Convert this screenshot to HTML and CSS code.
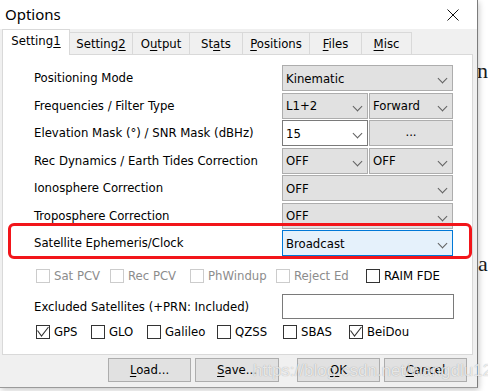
FILE: index.html
```html
<!DOCTYPE html>
<html>
<head>
<meta charset="utf-8">
<title>Options</title>
<link rel="stylesheet" href="styles.css">
</head>
<body>
<div class="desktop">
  <span class="bg-letter bg-n">n</span>
  <span class="bg-letter bg-a">a</span>

  <div class="dialog">
    <div class="titlebar">
      <span class="title">Options</span>
      <svg class="close" width="12" height="12" viewBox="0 0 12 12"><path d="M0.5 0.5 L11.5 11.5 M11.5 0.5 L0.5 11.5" stroke="#111" stroke-width="1" fill="none"/></svg>
    </div>

    <div class="client">
      <div class="tabs">
        <div class="tab active w-s1">Setting<u>1</u></div>
        <div class="tab w-s2">Setting<u>2</u></div>
        <div class="tab w-out">O<u>u</u>tput</div>
        <div class="tab w-stats">St<u>a</u>ts</div>
        <div class="tab w-pos"><u>P</u>ositions</div>
        <div class="tab w-files"><u>F</u>iles</div>
        <div class="tab w-misc"><u>M</u>isc</div>
      </div>

      <div class="panel">
        <div class="form">
          <div class="label">Positioning Mode</div>
          <div class="combo">Kinematic<span class="chev"></span></div>

          <div class="label">Frequencies / Filter Type</div>
          <div class="pair">
            <div class="combo narrow-l">L1+2<span class="chev"></span></div>
            <div class="combo narrow-r">Forward<span class="chev"></span></div>
          </div>

          <div class="label">Elevation Mask (°) / SNR Mask (dBHz)</div>
          <div class="pair">
            <div class="combo edit narrow-l">15<span class="chev"></span></div>
            <div class="btn-dots narrow-r">...</div>
          </div>

          <div class="label">Rec Dynamics / Earth Tides Correction</div>
          <div class="pair">
            <div class="combo narrow-l">OFF<span class="chev"></span></div>
            <div class="combo narrow-r">OFF<span class="chev"></span></div>
          </div>

          <div class="label">Ionosphere Correction</div>
          <div class="combo">OFF<span class="chev"></span></div>

          <div class="label">Troposphere Correction</div>
          <div class="combo">OFF<span class="chev"></span></div>

          <div class="label">Satellite Ephemeris/Clock</div>
          <div class="combo focus">Broadcast<span class="chev"></span></div>

          <div class="highlight"></div>
        </div>

        <div class="checks row1">
          <label class="chk dis cw-sat"><span class="box"></span>Sat PCV</label>
          <label class="chk dis cw-rec"><span class="box"></span>Rec PCV</label>
          <label class="chk dis cw-ph"><span class="box"></span>PhWindup</label>
          <label class="chk dis cw-rej"><span class="box"></span>Reject Ed</label>
          <label class="chk"><span class="box"></span>RAIM FDE</label>
        </div>

        <div class="excl">
          <div class="label">Excluded Satellites (+PRN: Included)</div>
          <div class="textbox"></div>
        </div>

        <div class="checks row3">
          <label class="chk cw-gps"><span class="box"><svg width="12" height="12" viewBox="0 0 12 12"><path d="M0.5 4.5 L4.5 10 L11.5 1" stroke="#333" stroke-width="1.1" fill="none"/></svg></span>GPS</label>
          <label class="chk cw-glo"><span class="box"></span>GLO</label>
          <label class="chk cw-gal"><span class="box"></span>Galileo</label>
          <label class="chk cw-qz"><span class="box"></span>QZSS</label>
          <label class="chk cw-sb"><span class="box"></span>SBAS</label>
          <label class="chk"><span class="box"><svg width="12" height="12" viewBox="0 0 12 12"><path d="M0.5 4.5 L4.5 10 L11.5 1" stroke="#333" stroke-width="1.1" fill="none"/></svg></span>BeiDou</label>
        </div>
      </div>

      <div class="buttons">
        <div class="button b-load"><u>L</u>oad...</div>
        <div class="button b-save"><u>S</u>ave...</div>
        <div class="button b-ok"><u>O</u>K</div>
        <div class="button b-cancel"><u>C</u>ancel</div>
      </div>
    </div>
  </div>

  <div class="watermark">https://blog.csdn.net/wangdlu123</div>
</div>
</body>
</html>
```

FILE: styles.css
```css
html, body {
  margin: 0;
  padding: 0;
}
body {
  width: 488px;
  height: 391px;
  overflow: hidden;
  background: #fff;
  font-family: "DejaVu Sans Condensed", "DejaVu Sans", sans-serif;
  font-size: 13px;
  color: #000;
}
.desktop {
  position: relative;
  width: 488px;
  height: 391px;
  overflow: hidden;
}
.bg-letter {
  position: absolute;
  font-family: "Liberation Serif", serif;
  font-size: 22px;
  color: #1a1a1a;
  line-height: 1;
}
.bg-n { left: 477px; top: 60px; }
.bg-a { left: 478px; top: 253px; }

.dialog {
  position: absolute;
  left: 0;
  top: 0;
  width: 477px;
  height: 387px;
  background: #f0f0f0;
  border-right: 1px solid #7c7c7c;
  border-bottom: 1px solid #9a9a9a;
  box-shadow: 1px 2px 6px rgba(0, 0, 0, 0.22);
  display: flex;
  flex-direction: column;
}
.titlebar {
  height: 29px;
  background: #fff;
  display: flex;
  align-items: center;
  justify-content: space-between;
  padding: 0 18px 0 5px;
  flex: none;
}
.title {
  font-family: "Noto Sans", "Open Sans", sans-serif;
  font-size: 15px;
  color: #000;
  margin-top: -1px;
}
.close { display: block; }

.client {
  flex: 1;
  display: flex;
  flex-direction: column;
}
.tabs {
  height: 25px;
  display: flex;
  align-items: flex-end;
  padding-left: 2px;
  flex: none;
  position: relative;
  z-index: 2;
}
.tab {
  box-sizing: border-box;
  height: 22px;
  border: 1px solid #d9d9d9;
  border-bottom: none;
  background: #f0f0f0;
  margin-left: -1px;
  text-align: center;
  line-height: 21px;
  color: #000;
}
.tab u { text-decoration-thickness: 1px; text-underline-offset: 2px; }
.tab.active {
  margin-left: 0;
  height: 26px;
  margin-bottom: -1px;
  background: #fff;
  line-height: 21px;
  position: relative;
}
.w-s1 { width: 68px; }
.w-s2 { width: 64px; }
.w-out { width: 58px; }
.w-stats { width: 54px; }
.w-pos { width: 68px; }
.w-files { width: 53px; }
.w-misc { width: 51px; }

.panel {
  box-sizing: border-box;
  margin: 0 4px 0 2px;
  height: 301px;
  background: #fff;
  border: 1px solid #d9d9d9;
  padding: 10px 0 0 31px;
  flex: none;
  position: relative;
}
.form {
  display: grid;
  grid-template-columns: 248px 171px;
  grid-auto-rows: 27.5px;
  align-items: start;
  position: relative;
}
.label {
  height: 26px;
  line-height: 26px;
  white-space: nowrap;
}
.combo {
  box-sizing: border-box;
  height: 26px;
  border: 1px solid #adadad;
  background: #e1e1e1;
  display: flex;
  align-items: center;
  padding-left: 3px;
  position: relative;
}
.combo.edit {
  background: #fff;
  border-color: #7a7a7a;
}
.combo.focus {
  background: #e5f1fb;
  border-color: #0078d7;
}
.chev {
  position: absolute;
  right: 6px;
  top: 9px;
  width: 6px;
  height: 6px;
  border-right: 1px solid #606060;
  border-bottom: 1px solid #606060;
  transform: rotate(45deg) scale(1, 1);
  transform-origin: center;
}
.pair {
  display: flex;
  gap: 1px;
}
.narrow-l { width: 86px; }
.narrow-r { width: 84px; }
.btn-dots {
  box-sizing: border-box;
  height: 26px;
  border: 1px solid #adadad;
  background: #e1e1e1;
  text-align: center;
  line-height: 22px;
}
.highlight {
  position: absolute;
  left: -26px;
  top: 158px;
  width: 464px;
  height: 36px;
  box-sizing: border-box;
  border: 3px solid #f2151a;
  border-radius: 6px;
  pointer-events: none;
}

.checks {
  display: flex;
  align-items: center;
  padding-left: 2px;
  height: 14px;
}
.row1 { margin-top: 11px; }
.row3 { margin-top: 6px; }
.chk {
  display: flex;
  align-items: center;
  gap: 4px;
  white-space: nowrap;
  flex: none;
}
.chk.dis { color: #8c8c8c; }
.box {
  box-sizing: border-box;
  width: 14px;
  height: 14px;
  border: 1px solid #333;
  background: #fff;
  display: flex;
  align-items: center;
  justify-content: center;
  flex: none;
}
.chk.dis .box { border-color: #cccccc; }
.box svg { display: block; }
.cw-sat { width: 74px; }
.cw-rec { width: 80px; }
.cw-ph { width: 86px; }
.cw-rej { width: 90px; }
.cw-gps { width: 55px; }
.cw-glo { width: 56px; }
.cw-gal { width: 70px; }
.cw-qz { width: 66px; }
.cw-sb { width: 66px; }

.excl {
  display: grid;
  grid-template-columns: 248px 172px;
  align-items: center;
  margin-top: 11px;
}
.excl .label { height: 25px; line-height: 25px; }
.textbox {
  box-sizing: border-box;
  height: 25px;
  border: 1px solid #7a7a7a;
  background: #fff;
}

.buttons {
  display: flex;
  padding-left: 108px;
  margin-top: 3px;
  flex: none;
}
.button {
  box-sizing: border-box;
  height: 24px;
  border: 1px solid #adadad;
  background: #e1e1e1;
  text-align: center;
  line-height: 22px;
}
.button u { text-underline-offset: 2px; }
.b-load { width: 83px; }
.b-save { width: 84px; margin-left: 4px; }
.b-ok { width: 83px; margin-left: 18px; }
.b-cancel { width: 83px; margin-left: 4px; }

.watermark {
  position: absolute;
  left: 253px;
  top: 361px;
  font-family: "Liberation Sans", sans-serif;
  font-size: 17px;
  color: rgba(255, 255, 255, 0.75);
  text-shadow: 0 0 1px rgba(0, 0, 0, 0.35);
  white-space: nowrap;
  pointer-events: none;
}
```
